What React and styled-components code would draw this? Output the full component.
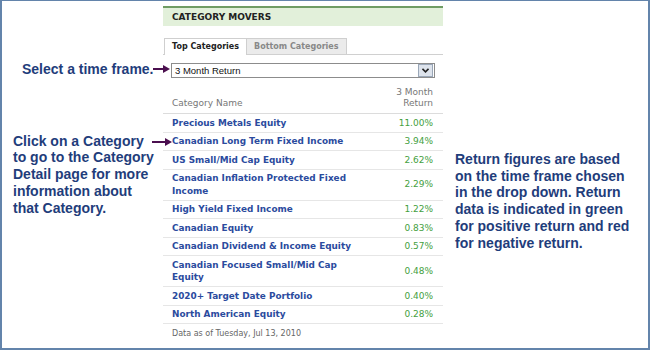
import React from "react";
import styled, { createGlobalStyle } from "styled-components";

const GlobalStyle = createGlobalStyle`
  html, body { margin: 0; padding: 0; background: #fff; }
`;

const Frame = styled.div`
  width: 650px;
  height: 350px;
  box-sizing: border-box;
  border: 2px solid #6384ab;
  border-top-width: 1px;
  display: flex;
  background: #fff;
  overflow: hidden;
`;

const SideCol = styled.div`
  width: ${({ w }) => w}px;
  flex: none;
  display: flex;
  flex-direction: column;
  padding-top: ${({ top }) => top || 0}px;
  box-sizing: border-box;
`;

const Note = styled.div`
  font-family: "Liberation Sans", Arial, sans-serif;
  font-weight: bold;
  font-size: 14px;
  line-height: 16.7px;
  color: #1f3d7b;
  white-space: nowrap;
`;

const NoteRow = styled.div`
  display: flex;
  align-items: ${({ top }) => (top ? "flex-start" : "center")};
  margin-top: ${({ mt }) => mt}px;
  padding-left: ${({ pl }) => pl}px;
`;

const ArrowWrap = styled.span`
  display: flex;
  margin-left: ${({ ml }) => ml}px;
  margin-right: -10px;
  margin-top: ${({ mt }) => mt || 0}px;
`;

const Widget = styled.div`
  width: 280px;
  flex: none;
  margin-top: 5px;
  display: flex;
  flex-direction: column;
  font-family: "DejaVu Sans", Verdana, sans-serif;
`;

const Header = styled.div`
  border-top: 2px solid #6f9c63;
  background: #e2f0da;
  height: 18px;
  line-height: 18px;
  padding-left: 9px;
  font-size: 9px;
  font-weight: bold;
  color: #222;
`;

const TabBar = styled.div`
  margin-top: 12px;
  display: flex;
  padding-left: 1px;
  border-bottom: 1px solid #d0d0d0;
  height: 16px;
`;

const Tab = styled.div`
  font-size: 8px;
  font-weight: bold;
  line-height: 15px;
  padding: 0 7px 0 7px;
  border: 1px solid #cfcfcf;
  border-bottom: none;
  margin-left: ${({ active }) => (active ? 0 : -1)}px;
  background: ${({ active }) => (active ? "#fff" : "#ebebeb")};
  color: ${({ active }) => (active ? "#222" : "#888")};
  height: ${({ active }) => (active ? 16 : 15)}px;
`;

const Select = styled.div`
  margin: 8px 8px 0 8px;
  height: 13px;
  border: 1px solid #8c8c8c;
  display: flex;
  align-items: center;
  justify-content: space-between;
  font-family: "Liberation Sans", Arial, sans-serif;
  font-size: 9.5px;
  color: #111;
  padding-left: 3px;
`;

const DropBtn = styled.div`
  width: 13px;
  height: 11px;
  margin-right: 1px;
  border: 1px solid #9aa7b8;
  background: #dde3ec;
  display: flex;
  align-items: center;
  justify-content: center;
`;

const ColHead = styled.div`
  margin-top: 9px;
  display: flex;
  justify-content: space-between;
  align-items: flex-end;
  padding: 0 10px 4px 9px;
  border-bottom: 1px solid #dcdcdc;
  font-size: 9px;
  line-height: 11px;
  color: #777;
`;

const RightHead = styled.div`
  text-align: right;
`;

const Row = styled.div`
  display: flex;
  justify-content: space-between;
  align-items: center;
  padding: 2.5px 10px 2.5px 9px;
  border-bottom: 1px solid #e6e6e6;
`;

const CatLink = styled.a`
  font-size: 8.9px;
  font-weight: bold;
  line-height: 12.5px;
  color: #2b4b9e;
  text-decoration: none;
  max-width: 190px;
`;

const Pct = styled.span`
  font-size: 9px;
  line-height: 12.5px;
  color: ${({ neg }) => (neg ? "#c33" : "#44a040")};
`;

const Footer = styled.div`
  padding: 4px 9px;
  font-size: 8px;
  line-height: 11px;
  color: #666;
`;

const Arrow = ({ w }) => (
  <svg width={w} height="8" viewBox={`0 0 ${w} 8`}>
    <line x1="0" y1="4" x2={w - 6} y2="4" stroke="#4b0f4f" strokeWidth="2" />
    <polygon points={`${w - 7},0 ${w},4 ${w - 7},8`} fill="#4b0f4f" />
  </svg>
);

const rows = [
  ["Precious Metals Equity", "11.00%"],
  ["Canadian Long Term Fixed Income", "3.94%"],
  ["US Small/Mid Cap Equity", "2.62%"],
  ["Canadian Inflation Protected Fixed Income", "2.29%"],
  ["High Yield Fixed Income", "1.22%"],
  ["Canadian Equity", "0.83%"],
  ["Canadian Dividend & Income Equity", "0.57%"],
  ["Canadian Focused Small/Mid Cap Equity", "0.48%"],
  ["2020+ Target Date Portfolio", "0.40%"],
  ["North American Equity", "0.28%"],
];

export default function App() {
  return (
    <>
      <GlobalStyle />
      <Frame>
        <SideCol w={161}>
          <NoteRow mt={60} pl={20}>
            <Note>Select a time frame.</Note>
            <ArrowWrap ml={-1}>
              <Arrow w={17} />
            </ArrowWrap>
          </NoteRow>
          <NoteRow top mt={55} pl={11}>
            <Note>
              Click on a Category
              <br />
              to go to the Category
              <br />
              Detail page for more
              <br />
              information about
              <br />
              that Category.
            </Note>
            <ArrowWrap ml={-2} mt={5}>
              <Arrow w={20} />
            </ArrowWrap>
          </NoteRow>
        </SideCol>
        <Widget>
          <Header>CATEGORY MOVERS</Header>
          <TabBar>
            <Tab active>Top Categories</Tab>
            <Tab>Bottom Categories</Tab>
          </TabBar>
          <Select>
            <span>3 Month Return</span>
            <DropBtn>
              <svg width="7" height="5" viewBox="0 0 7 5">
                <polyline points="0.5,0.8 3.5,3.8 6.5,0.8" fill="none" stroke="#222" strokeWidth="1.6" />
              </svg>
            </DropBtn>
          </Select>
          <ColHead>
            <span>Category Name</span>
            <RightHead>
              3 Month
              <br />
              Return
            </RightHead>
          </ColHead>
          {rows.map(([name, pct]) => (
            <Row key={name}>
              <CatLink href="#">{name}</CatLink>
              <Pct>{pct}</Pct>
            </Row>
          ))}
          <Footer>Data as of Tuesday, Jul 13, 2010</Footer>
        </Widget>
        <SideCol w={205} top={150}>
          <NoteRow mt={0} pl={12}>
            <Note>
              Return figures are based
              <br />
              on the time frame chosen
              <br />
              in the drop down. Return
              <br />
              data is indicated in green
              <br />
              for positive return and red
              <br />
              for negative return.
            </Note>
          </NoteRow>
        </SideCol>
      </Frame>
    </>
  );
}
